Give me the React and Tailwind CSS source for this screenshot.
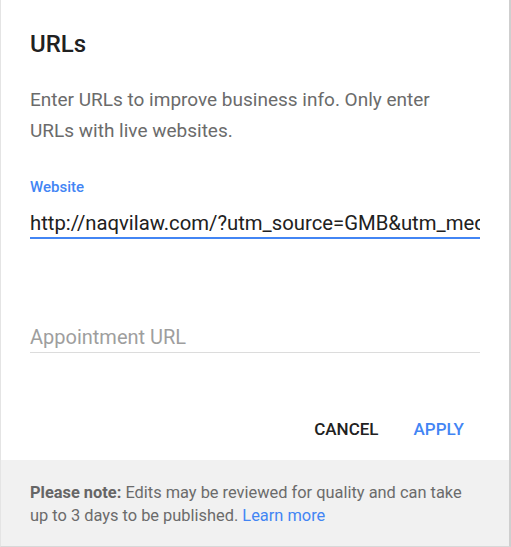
import React from 'react';

export default function App() {
  return (
    <div className="w-[511px] h-[547px] bg-white flex flex-col border-l border-[#e4e4e4] border-r-2 border-r-[#cfcfcf] border-b border-b-[#d8d8d8] font-['Roboto',sans-serif] overflow-hidden">
      <div className="flex flex-col px-[29px] pt-[28px]">
        <h1 className="text-[24px] leading-[32px] font-medium text-[#212121]">URLs</h1>
        <p className="mt-[24px] text-[19px] leading-[31px] text-[#6b6b6b]">
          Enter URLs to improve business info. Only enter
          <br />
          URLs with live websites.
        </p>

        <label className="mt-[31px] text-[15px] leading-[20px] font-medium text-[#4285f4]">Website</label>
        <div className="mt-[13px] h-[29px] border-b-2 border-[#4285f4] overflow-hidden whitespace-nowrap text-[20.3px] leading-[26px] text-[#212121]">
          http://naqvilaw.com/?utm_source=GMB&amp;utm_medium=organic
        </div>

        <div className="mt-[84px] h-[30px] border-b border-[#dcdcdc] text-[20px] leading-[28px] text-[#9e9e9e]">
          Appointment URL
        </div>

        <div className="mt-[66px] flex justify-end gap-[35px] pr-[16px]">
          <button className="text-[17px] leading-[20px] font-medium text-[#212121]">CANCEL</button>
          <button className="text-[17px] leading-[20px] font-medium text-[#4285f4]">APPLY</button>
        </div>
      </div>

      <div className="mt-auto bg-[#f1f1f1] px-[29px] pt-[21px] h-[86px] text-[16.4px] leading-[23px] text-[#6b6b6b]">
        <span className="font-bold text-[#666]">Please note:</span> Edits may be reviewed for quality and can take
        <br />
        up to 3 days to be published. <a className="text-[#4285f4]">Learn more</a>
      </div>
    </div>
  );
}
